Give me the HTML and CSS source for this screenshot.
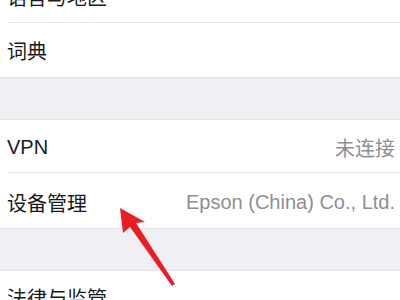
FILE: index.html
```html
<!DOCTYPE html>
<html>
<head>
<meta charset="utf-8">
<link rel="stylesheet" href="styles.css">
</head>
<body>
<div class="page">
  <div class="group first">
    <div class="row"><div class="inner"><span class="label">语言与地区</span></div></div>
    <div class="row"><div class="inner last tall"><span class="label">词典</span></div></div>
  </div>
  <div class="gap"></div>
  <div class="group">
    <div class="row"><div class="inner low"><span class="label">VPN</span><span class="value">未连接</span></div></div>
    <div class="row"><div class="inner last taller"><span class="label">设备管理</span><span class="value">Epson (China) Co., Ltd.</span></div></div>
  </div>
  <div class="gap"></div>
  <div class="group">
    <div class="row"><div class="inner"><span class="label">法律与监管</span></div></div>
  </div>
  <svg class="arrow" width="400" height="300" viewBox="0 0 400 300">
    <polygon points="120,208 123,233 130,227 172,286 175,284 136,223 145,222" fill="#ea1c24"/>
  </svg>
</div>
</body>
</html>
```
FILE: styles.css
```css
html, body {
  margin: 0;
  padding: 0;
  background: #ffffff;
}
.page {
  position: relative;
  width: 400px;
  height: 300px;
  overflow: hidden;
  font-family: "Liberation Sans", "Noto Sans CJK SC", sans-serif;
}
.group {
  background: #ffffff;
}
.group.first {
  margin-top: -30px;
}
.row {
  padding-left: 7px;
}
.inner {
  height: 53px;
  box-sizing: border-box;
  border-bottom: 1px solid #e4e4e6;
  display: flex;
  align-items: center;
  justify-content: space-between;
  padding-right: 5px;
}
.inner.tall {
  height: 54px;
}
.inner.low {
  padding-top: 2px;
}
.inner.taller {
  height: 55px;
  padding-top: 4px;
}
.inner.last {
  border-bottom: none;
}
.label {
  font-size: 20px;
  color: #1a1a1a;
}
.value {
  font-size: 20px;
  color: #8e8e93;
}
.gap {
  height: 41px;
  background: #f0f0f4;
  border-top: 1px solid #e2e2e6;
  border-bottom: 1px solid #e2e2e6;
}
.arrow {
  position: absolute;
  left: 0;
  top: 0;
}
```
